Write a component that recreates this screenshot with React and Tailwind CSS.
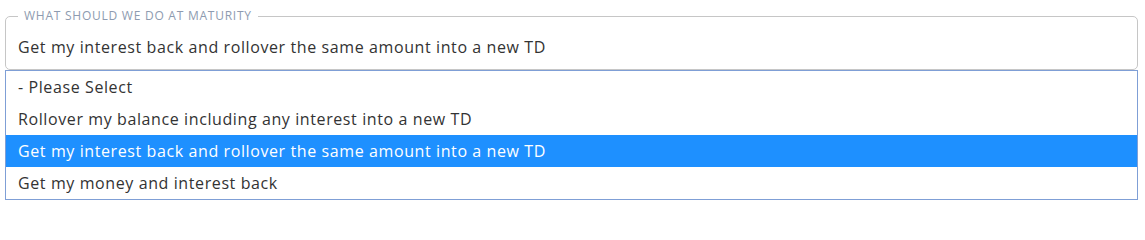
const options = [
  '- Please Select',
  'Rollover my balance including any interest into a new TD',
  'Get my interest back and rollover the same amount into a new TD',
  'Get my money and interest back',
];

const SELECTED = 2;

export default function App() {
  return (
    <div className="bg-white w-[1145px] h-[207px] pt-[9px] pl-[5px] font-['Open_Sans',sans-serif]">
      <fieldset className="w-[1133px] h-[61px] border border-[#c6c6c6] rounded-[5px] pl-[12px] m-0">
        <legend className="px-[6px] text-[12px] leading-[14px] uppercase text-[#8e9bb0] tracking-[0.75px]">
          What should we do at maturity
        </legend>
        <div className="text-[16px] text-[#333] leading-[22px] pt-[13px] tracking-[0.6px]">
          {options[SELECTED]}
        </div>
      </fieldset>
      <ul className="w-[1133px] border border-[#7f9fd6]">
        {options.map((o, i) => (
          <li
            key={o}
            className={
              'h-[32px] flex items-center pl-[12px] text-[16px] tracking-[0.6px] ' +
              (i === SELECTED ? 'bg-[#1e90ff] text-white' : 'text-[#333]')
            }
          >
            {o}
          </li>
        ))}
      </ul>
    </div>
  );
}
